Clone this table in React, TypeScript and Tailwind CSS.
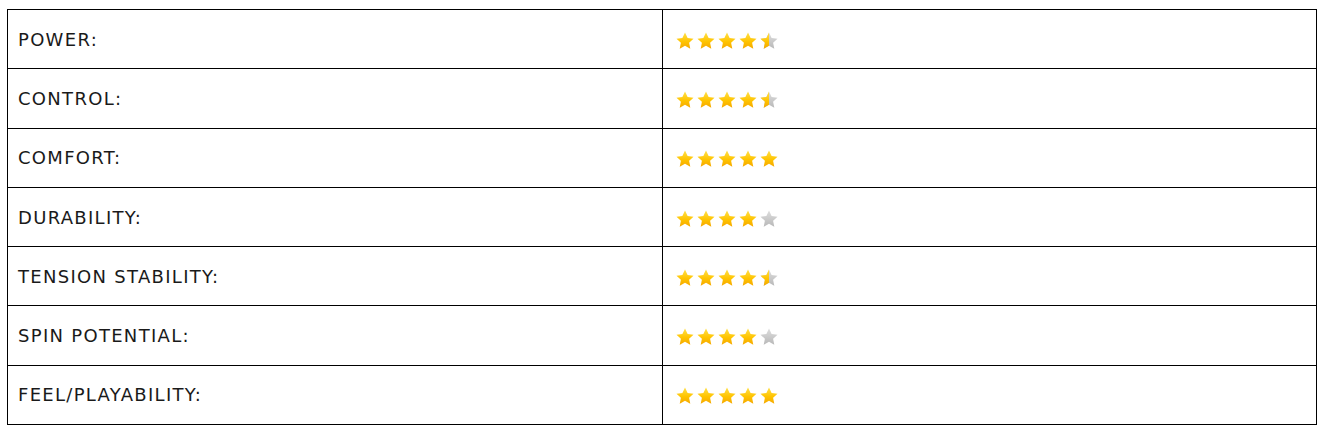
import React from "react";

const ratings: { label: string; value: number }[] = [
  { label: "POWER:", value: 4.5 },
  { label: "CONTROL:", value: 4.5 },
  { label: "COMFORT:", value: 5 },
  { label: "DURABILITY:", value: 4 },
  { label: "TENSION STABILITY:", value: 4.5 },
  { label: "SPIN POTENTIAL:", value: 4 },
  { label: "FEEL/PLAYABILITY:", value: 5 },
];

const STAR =
  "M9 0.6 L11.6 6 L17.5 6.7 L13.1 10.8 L14.3 16.7 L9 13.8 L3.7 16.7 L4.9 10.8 L0.5 6.7 L6.4 6 Z";

const Star = ({ fill, id }: { fill: "full" | "half" | "empty"; id: string }) => (
  <svg width="18" height="17" viewBox="0 0 18 17" className="block">
    <defs>
      <linearGradient id={`g-${id}`} x1="0" y1="0" x2="0" y2="1">
        <stop offset="0" stopColor="#ffe04a" />
        <stop offset="0.55" stopColor="#ffc400" />
        <stop offset="1" stopColor="#f5a800" />
      </linearGradient>
      <linearGradient id={`e-${id}`} x1="0" y1="0" x2="0" y2="1">
        <stop offset="0" stopColor="#dedede" />
        <stop offset="1" stopColor="#b8b8b8" />
      </linearGradient>
      <clipPath id={`c-${id}`}>
        <rect x="0" y="0" width="9" height="17" />
      </clipPath>
    </defs>
    <path d={STAR} fill={fill === "full" ? `url(#g-${id})` : `url(#e-${id})`} />
    {fill === "half" && <path d={STAR} fill={`url(#g-${id})`} clipPath={`url(#c-${id})`} />}
  </svg>
);

const Stars = ({ value, row }: { value: number; row: number }) => (
  <div className="flex items-center gap-[3px]">
    {[0, 1, 2, 3, 4].map((i) => {
      const f = value >= i + 1 ? "full" : value >= i + 0.5 ? "half" : "empty";
      return <Star key={i} fill={f} id={`${row}-${i}`} />;
    })}
  </div>
);

export default function App() {
  return (
    <div className="bg-white w-[1322px] h-[427px] pt-[9px] pl-[7px]">
      <table className="w-[1310px] border-collapse border border-black text-[18px] text-[#1a1a1a] font-['DejaVu_Sans',sans-serif]">
        <tbody>
          {ratings.map((r, idx) => (
            <tr key={r.label} className="h-[59.3px]">
              <td className="w-1/2 border border-black pl-[10px] align-middle tracking-[1.3px]">
                {r.label}
              </td>
              <td className="w-1/2 border border-black pl-[13px] pt-[2px] align-middle">
                <Stars value={r.value} row={idx} />
              </td>
            </tr>
          ))}
        </tbody>
      </table>
    </div>
  );
}
